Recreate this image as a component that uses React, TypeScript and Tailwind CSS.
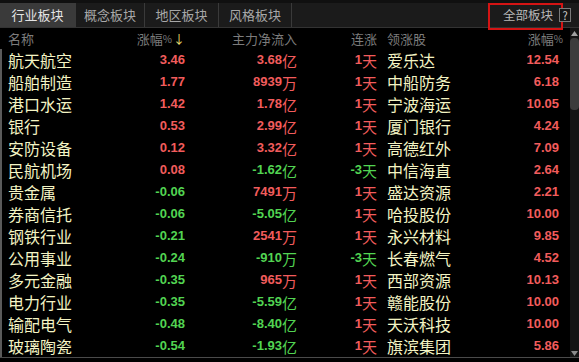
import type { ReactNode } from 'react'

type Row = {
  name: string
  pct: string
  flow: string
  unit: string
  streak: string
  leader: string
  leaderPct: string
}

const rows: Row[] = [
  { name: '航天航空', pct: '3.46', flow: '3.68', unit: '亿', streak: '1', leader: '爱乐达', leaderPct: '12.54' },
  { name: '船舶制造', pct: '1.77', flow: '8939', unit: '万', streak: '1', leader: '中船防务', leaderPct: '6.18' },
  { name: '港口水运', pct: '1.42', flow: '1.78', unit: '亿', streak: '1', leader: '宁波海运', leaderPct: '10.05' },
  { name: '银行', pct: '0.53', flow: '2.99', unit: '亿', streak: '1', leader: '厦门银行', leaderPct: '4.24' },
  { name: '安防设备', pct: '0.12', flow: '3.32', unit: '亿', streak: '1', leader: '高德红外', leaderPct: '7.09' },
  { name: '民航机场', pct: '0.08', flow: '-1.62', unit: '亿', streak: '-3', leader: '中信海直', leaderPct: '2.64' },
  { name: '贵金属', pct: '-0.06', flow: '7491', unit: '万', streak: '1', leader: '盛达资源', leaderPct: '2.21' },
  { name: '券商信托', pct: '-0.06', flow: '-5.05', unit: '亿', streak: '1', leader: '哈投股份', leaderPct: '10.00' },
  { name: '钢铁行业', pct: '-0.21', flow: '2541', unit: '万', streak: '1', leader: '永兴材料', leaderPct: '9.85' },
  { name: '公用事业', pct: '-0.24', flow: '-910', unit: '万', streak: '-3', leader: '长春燃气', leaderPct: '4.52' },
  { name: '多元金融', pct: '-0.35', flow: '965', unit: '万', streak: '1', leader: '西部资源', leaderPct: '10.13' },
  { name: '电力行业', pct: '-0.35', flow: '-5.59', unit: '亿', streak: '1', leader: '赣能股份', leaderPct: '10.00' },
  { name: '输配电气', pct: '-0.48', flow: '-8.40', unit: '亿', streak: '1', leader: '天沃科技', leaderPct: '10.00' },
  { name: '玻璃陶瓷', pct: '-0.54', flow: '-1.93', unit: '亿', streak: '1', leader: '旗滨集团', leaderPct: '5.86' },
]

const tabs = [
  { label: '行业板块', w: 'w-[76px]' },
  { label: '概念板块', w: 'w-[69px]' },
  { label: '地区板块', w: 'w-[74px]' },
  { label: '风格板块', w: 'w-[73px]' },
]

const cjk = "font-['Noto_Sans_CJK_SC',sans-serif]"
const num = "font-['Liberation_Sans','Noto_Sans_CJK_SC',sans-serif] font-bold text-[13px]"

function tone(v: string) {
  return v.startsWith('-') ? 'text-[#52d452]' : 'text-[#f25c5c]'
}

function Cell({ className, children }: { className: string; children: ReactNode }) {
  return <div className={`flex items-center ${className}`}>{children}</div>
}

function App() {
  return (
    <div className={`relative h-[362px] w-[579px] overflow-hidden bg-black ${cjk}`}>
      {/* tab strip */}
      <div className="flex h-[28px] bg-[#101010] pt-[3px]">
        <div className="flex flex-1 border-b border-[#333] bg-[#1b1b1b]">
          {tabs.map((t, i) => (
            <div
              key={t.label}
              className={`${t.w} flex items-center justify-center border-r border-[#3a3a3a] text-[13px] ${
                i === 0 ? 'bg-[#3a3a3a] text-[#e4e4e4]' : 'text-[#a8a8a8]'
              }`}
            >
              {t.label}
            </div>
          ))}
          <div className="flex-1" />
          <div className="flex w-[91px] items-center pl-[15px] text-[12.5px] text-[#b8b8b8]">全部板块</div>
        </div>
      </div>

      {/* red highlight and help box */}
      <div className="absolute left-[488px] top-[3px] h-[27px] w-[75px] border-2 border-[#d41414]" />
      <div className="absolute left-[559px] top-[8px] flex h-[14px] w-[12px] items-center justify-center border border-[#7a7a7a] bg-[#151515] text-[11px] leading-none text-[#d0d0d0]">
        ?
      </div>

      <div className="flex h-[330px] border-b border-[#4a4a4a]">
        <div className="flex-1">
          {/* header */}
          <div className="flex h-[21px] items-center pl-[8px] text-[13px] text-[#7c7c7c]">
            <Cell className="w-[122px]">名称</Cell>
            <Cell className="w-[55px] justify-end">
              涨幅<span className="text-[10px]">%</span>
              <span className="ml-[1px] text-[12px] text-[#f0e070]">↓</span>
            </Cell>
            <Cell className="w-[112px] justify-end">主力净流入</Cell>
            <Cell className="w-[80px] justify-end">连涨</Cell>
            <Cell className="ml-[10px] w-[110px]">领涨股</Cell>
            <Cell className="w-[66px] justify-end">
              涨幅<span className="text-[10px]">%</span>
            </Cell>
          </div>

          {/* rows */}
          <div className="border-l-2 border-[#5a5a5a]">
            {rows.map((r) => (
              <div key={r.name} className="flex h-[22px] items-center pl-[6px]">
                <Cell className="w-[122px] text-[16px] text-[#f4f4c4]">{r.name}</Cell>
                <Cell className={`w-[55px] justify-end ${num} ${tone(r.pct)}`}>{r.pct}</Cell>
                <Cell className={`w-[112px] justify-end ${tone(r.flow)}`}>
                  <span className={num}>{r.flow}</span>
                  <span className={`${cjk} text-[15px] leading-none`}>{r.unit}</span>
                </Cell>
                <Cell className={`w-[80px] justify-end ${tone(r.streak)}`}>
                  <span className={num}>{r.streak}</span>
                  <span className={`${cjk} text-[15px] leading-none`}>天</span>
                </Cell>
                <Cell className="ml-[10px] w-[110px] text-[16px] text-[#f4f4c4]">{r.leader}</Cell>
                <Cell className={`w-[62px] justify-end ${num} text-[#f25c5c]`}>{r.leaderPct}</Cell>
              </div>
            ))}
          </div>
        </div>

        {/* scrollbar */}
        <div className="flex w-[9px] flex-col items-center bg-[#141414] pt-[3px]">
          <svg width="7" height="5" viewBox="0 0 7 5">
            <path d="M3.5 0 L7 5 L0 5 Z" fill="#a0a0a0" />
          </svg>
          <div className="mt-[2px] h-[72px] w-[9px] rounded-[4px] bg-[#3c3c3c]" />
          <div className="flex-1" />
          <svg width="7" height="5" viewBox="0 0 7 5" className="mb-[1px]">
            <path d="M0 0 L7 0 L3.5 5 Z" fill="#8a8a8a" />
          </svg>
        </div>
      </div>
    </div>
  )
}

export default App
